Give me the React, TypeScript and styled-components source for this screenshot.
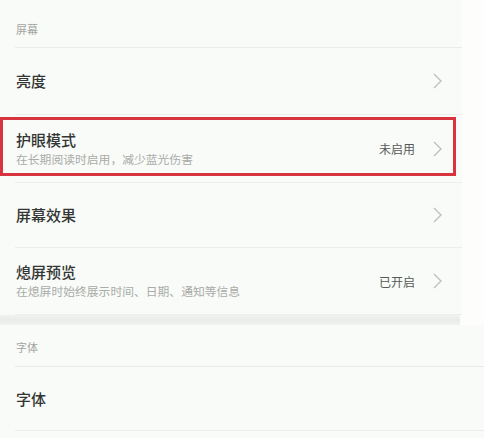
import React from "react";
import styled, { createGlobalStyle } from "styled-components";

const GlobalStyle = createGlobalStyle`
  html, body {
    margin: 0;
    padding: 0;
    background: #fdfefc;
  }
  body {
    font-family: "Noto Sans CJK SC", "Noto Sans", sans-serif;
    -webkit-font-smoothing: antialiased;
  }
`;

const Page = styled.div`
  width: 484px;
  height: 438px;
  overflow: hidden;
`;

const Group = styled.section<{ $full?: boolean }>`
  width: ${({ $full }) => ($full ? "484px" : "462px")};
  background: #f9fbf8;
`;

const SectionHeader = styled.div<{ $height: number; $top: number }>`
  height: ${({ $height }) => $height}px;
  margin-left: 15px;
  padding: ${({ $top }) => $top}px 0 0 1px;
  box-sizing: border-box;
  display: flex;
  align-items: center;
  font-size: 11px;
  color: #a3a5a2;
  border-bottom: 1px solid #e9ebe8;
`;

const Row = styled.div<{ $height: number }>`
  position: relative;
  height: ${({ $height }) => $height}px;
  margin-left: 15px;
  padding: 0 20px 0 1px;
  display: flex;
  align-items: center;
  border-bottom: 1px solid #eceeeb;
  box-sizing: border-box;
`;

const TextCol = styled.div`
  flex: 1;
  display: flex;
  flex-direction: column;
  gap: 2px;
`;

const Title = styled.div`
  font-size: 15px;
  font-weight: 500;
  color: #333533;
  line-height: 18px;
`;

const Sub = styled.div`
  font-size: 11.8px;
  color: #a9aba8;
  line-height: 16px;
`;

const Value = styled.span`
  font-size: 12px;
  color: #575957;
  margin-right: 18px;
`;

const Chevron = styled.svg`
  width: 9px;
  height: 16px;
  flex: none;
`;

const Highlight = styled.div`
  position: absolute;
  left: -15px;
  right: 6px;
  top: 2px;
  bottom: 6px;
  border: 3px solid #d7343f;
  pointer-events: none;
`;

const Band = styled.div`
  width: 460px;
  height: 10px;
  background: linear-gradient(#f0f2ef, #e9ebe8 50%, #f1f3f0);
`;

const Spacer = styled.div`
  height: 20px;
`;

const Arrow = () => (
  <Chevron viewBox="0 0 9 16">
    <path d="M1 1 L8 8 L1 15" fill="none" stroke="#bcbebb" strokeWidth="1.3" />
  </Chevron>
);

type Item = {
  title: string;
  sub?: string;
  value?: string;
  height: number;
  arrow?: boolean;
  marked?: boolean;
};

const screenItems: Item[] = [
  { title: "亮度", height: 67, arrow: true },
  { title: "护眼模式", sub: "在长期阅读时启用，减少蓝光伤害", value: "未启用", height: 68, arrow: true, marked: true },
  { title: "屏幕效果", height: 65, arrow: true },
  { title: "熄屏预览", sub: "在熄屏时始终展示时间、日期、通知等信息", value: "已开启", height: 67, arrow: true },
];

const SettingRow = ({ item }: { item: Item }) => (
  <Row $height={item.height}>
    <TextCol>
      <Title>{item.title}</Title>
      {item.sub && <Sub>{item.sub}</Sub>}
    </TextCol>
    {item.value && <Value>{item.value}</Value>}
    {item.arrow && <Arrow />}
    {item.marked && <Highlight />}
  </Row>
);

export default function App() {
  return (
    <Page>
      <GlobalStyle />
      <Group>
        <SectionHeader $height={48} $top={11}>
          屏幕
        </SectionHeader>
        {screenItems.map((item) => (
          <SettingRow key={item.title} item={item} />
        ))}
      </Group>
      <Band />
      <Group $full>
        <SectionHeader $height={42} $top={2}>
          字体
        </SectionHeader>
        <SettingRow item={{ title: "字体", height: 64 }} />
        <Spacer />
      </Group>
    </Page>
  );
}
